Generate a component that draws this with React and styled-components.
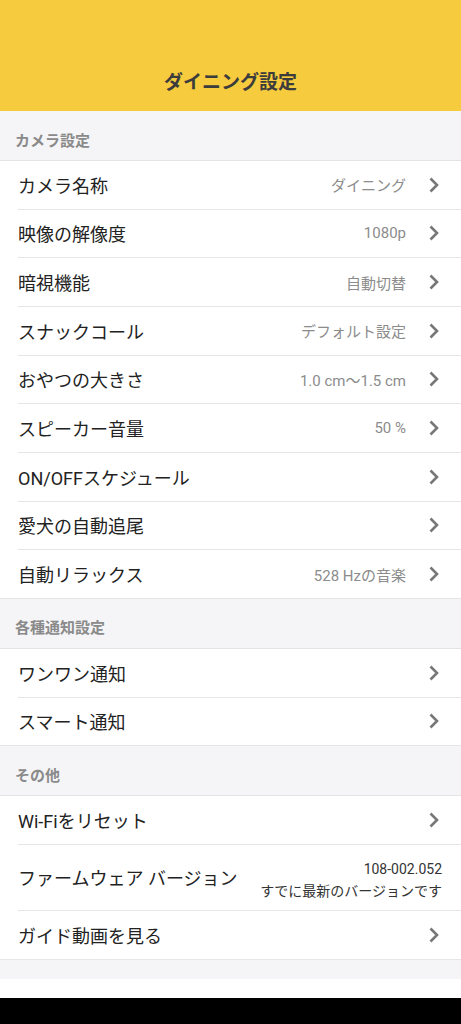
import React from "react"
import styled, { createGlobalStyle } from "styled-components"

const GlobalStyle = createGlobalStyle`
  html, body {
    margin: 0;
    padding: 0;
    background: #ffffff;
  }
  body {
    font-family: Roboto, "Noto Sans CJK JP", sans-serif;
    -webkit-font-smoothing: antialiased;
  }
`

const Page = styled.div`
  width: 461px;
  display: flex;
  flex-direction: column;
`

const Header = styled.header`
  height: 111px;
  box-sizing: border-box;
  background-color: #f6cb3d;
  display: flex;
  align-items: flex-end;
  justify-content: center;
  padding-bottom: 16px;
`

const Title = styled.h1`
  margin: 0;
  font-size: 19px;
  line-height: 24px;
  font-weight: 700;
  color: #3c3c3c;
`

const SectionHeader = styled.div`
  height: 50px;
  box-sizing: border-box;
  display: flex;
  align-items: center;
  padding: 7px 0 0 15px;
  background-color: #f5f5f7;
  border-bottom: 1px solid #e4e4e6;
  font-size: 15px;
  font-weight: 700;
  color: #8a8a8a;
`

const Group = styled.div`
  background-color: #ffffff;
  display: flex;
  flex-direction: column;
`

const Row = styled.div`
  height: ${p => (p.$tall ? "66px" : "48.67px")};
  box-sizing: border-box;
  display: flex;
  align-items: center;
  margin-left: 18px;
  padding-right: ${p => (p.$tall ? "19px" : "21px")};
  border-bottom: 1px solid #e6e6e8;

  &:last-child {
    margin-left: 0;
    padding-left: 18px;
  }
`

const Label = styled.span`
  flex: 1;
  font-size: 18px;
  color: #222222;
  white-space: nowrap;
`

const Value = styled.span`
  font-size: 15px;
  color: #8c8c8c;
  margin-right: 22px;
  white-space: nowrap;
`

const Stack = styled.div`
  display: flex;
  flex-direction: column;
  align-items: flex-end;
  gap: 4px;
  padding-top: 6px;
  font-size: 14px;
  line-height: 18px;
  color: #333333;
`

const Spacer = styled.div`
  height: 19px;
  background-color: #f5f5f7;
`

const Blank = styled.div`
  height: 19px;
  background-color: #ffffff;
`

const NavBar = styled.div`
  height: 27px;
  background-color: #000000;
`

const Chevron = () => (
  <svg width="12" height="16" viewBox="0 0 12 16" aria-hidden="true">
    <path
      d="M2.5 1.5 L9 8 L2.5 14.5"
      fill="none"
      stroke="#777777"
      strokeWidth="2.6"
      strokeLinecap="butt"
      strokeLinejoin="miter"
    />
  </svg>
)

const SettingRow = ({ label, value }) => (
  <Row>
    <Label>{label}</Label>
    {value && <Value>{value}</Value>}
    <Chevron />
  </Row>
)

const camera = [
  ["カメラ名称", "ダイニング"],
  ["映像の解像度", "1080p"],
  ["暗視機能", "自動切替"],
  ["スナックコール", "デフォルト設定"],
  ["おやつの大きさ", "1.0 cm〜1.5 cm"],
  ["スピーカー音量", "50 %"],
  ["ON/OFFスケジュール"],
  ["愛犬の自動追尾"],
  ["自動リラックス", "528 Hzの音楽"],
]

const notify = [["ワンワン通知"], ["スマート通知"]]

export default function App() {
  return (
    <Page>
      <GlobalStyle />
      <Header>
        <Title>ダイニング設定</Title>
      </Header>

      <SectionHeader>カメラ設定</SectionHeader>
      <Group>
        {camera.map(([l, v]) => (
          <SettingRow key={l} label={l} value={v} />
        ))}
      </Group>

      <SectionHeader>各種通知設定</SectionHeader>
      <Group>
        {notify.map(([l]) => (
          <SettingRow key={l} label={l} />
        ))}
      </Group>

      <SectionHeader>その他</SectionHeader>
      <Group>
        <SettingRow label="Wi-Fiをリセット" />
        <Row $tall>
          <Label>ファームウェア バージョン</Label>
          <Stack>
            <span>108-002.052</span>
            <span>すでに最新のバージョンです</span>
          </Stack>
        </Row>
        <SettingRow label="ガイド動画を見る" />
      </Group>

      <Spacer />
      <Blank />
      <NavBar />
    </Page>
  )
}
